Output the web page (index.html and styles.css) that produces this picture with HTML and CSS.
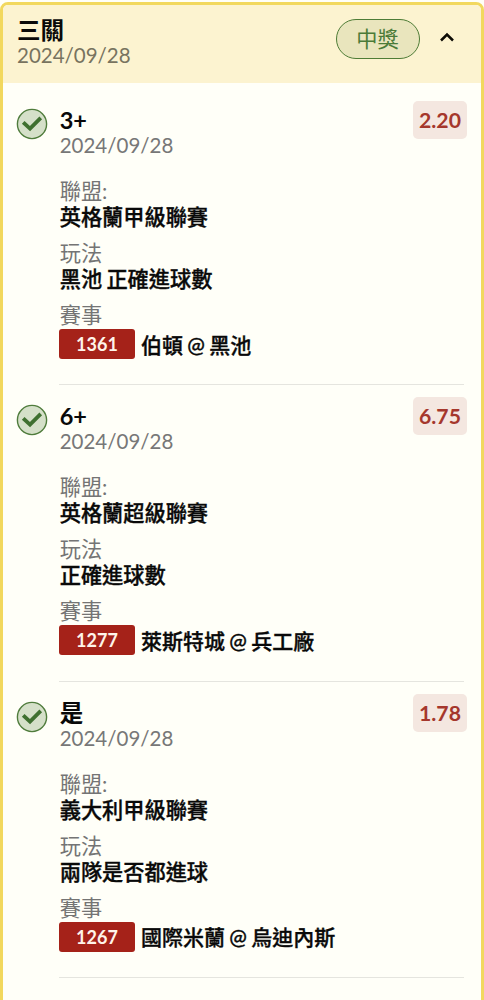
FILE: index.html
```html
<!DOCTYPE html>
<html lang="zh-Hant">
<head>
<meta charset="utf-8">
<title>三關</title>
<link rel="stylesheet" href="styles.css">
</head>
<body>
<main class="card">
  <header class="head">
    <div class="head-text">
      <h1 class="title">三關</h1>
      <div class="date">2024/09/28</div>
    </div>
    <span class="status">中獎</span>
    <svg class="chevron" viewBox="0 0 16 12"><path d="M2 9.5 8 3.5l6 6" fill="none" stroke="#0c0b05" stroke-width="2.5"/></svg>
  </header>
  <section class="leg">
    <svg class="check" viewBox="0 0 32 32"><circle cx="16" cy="16" r="14.6" fill="#d5e0c9" stroke="#4f7c3c" stroke-width="1.4"/><path d="M8.6 15.7 14 20.7 23.4 11.2" fill="none" stroke="#3f7030" stroke-width="3.8" stroke-linecap="square"/></svg>
    <div class="body">
      <h2 class="pick">3+</h2>
      <div class="date">2024/09/28</div>
      <dl class="info">
        <dt>聯盟:</dt><dd>英格蘭甲級聯賽</dd>
        <dt>玩法</dt><dd>黑池 正確進球數</dd>
        <dt>賽事</dt><dd class="match"><span class="code">1361</span><span class="teams">伯頓 @ 黑池</span></dd>
      </dl>
    </div>
    <span class="odds">2.20</span>
  </section>
  <section class="leg">
    <svg class="check" viewBox="0 0 32 32"><circle cx="16" cy="16" r="14.6" fill="#d5e0c9" stroke="#4f7c3c" stroke-width="1.4"/><path d="M8.6 15.7 14 20.7 23.4 11.2" fill="none" stroke="#3f7030" stroke-width="3.8" stroke-linecap="square"/></svg>
    <div class="body">
      <h2 class="pick">6+</h2>
      <div class="date">2024/09/28</div>
      <dl class="info">
        <dt>聯盟:</dt><dd>英格蘭超級聯賽</dd>
        <dt>玩法</dt><dd>正確進球數</dd>
        <dt>賽事</dt><dd class="match"><span class="code">1277</span><span class="teams">萊斯特城 @ 兵工廠</span></dd>
      </dl>
    </div>
    <span class="odds">6.75</span>
  </section>
  <section class="leg">
    <svg class="check" viewBox="0 0 32 32"><circle cx="16" cy="16" r="14.6" fill="#d5e0c9" stroke="#4f7c3c" stroke-width="1.4"/><path d="M8.6 15.7 14 20.7 23.4 11.2" fill="none" stroke="#3f7030" stroke-width="3.8" stroke-linecap="square"/></svg>
    <div class="body">
      <h2 class="pick">是</h2>
      <div class="date">2024/09/28</div>
      <dl class="info">
        <dt>聯盟:</dt><dd>義大利甲級聯賽</dd>
        <dt>玩法</dt><dd>兩隊是否都進球</dd>
        <dt>賽事</dt><dd class="match"><span class="code">1267</span><span class="teams">國際米蘭 @ 烏迪內斯</span></dd>
      </dl>
    </div>
    <span class="odds">1.78</span>
  </section>
</main>
</body>
</html>
```
FILE: styles.css
```css
* { box-sizing: border-box; }
html, body { height: 100%; }
body {
  margin: 0;
  padding: 2px 0.5px 0 0;
  overflow: hidden;
  background: #fffff8;
  font: 21.2px/26px Lato, "Noto Sans CJK TC", sans-serif;
  color: #090909;
}
h1, h2, dl, dd { margin: 0; }
.card {
  height: 1040px;
  border: 3px solid #f2d85e;
  border-radius: 8px;
  background: #fffff8;
  overflow: hidden;
}
.head {
  display: flex;
  align-items: flex-start;
  height: 78px;
  padding: 12px 26px 0 14px;
  background: #fcf3d0;
}
.head-text { flex: 1; }
.title { font-size: 23.6px; line-height: 26px; font-weight: 700; }
.date { color: #777; font-size: 20.5px; line-height: 24px; }
.head .date { color: #78735f; }
.status {
  width: 84px;
  height: 40px;
  margin-top: 2px;
  border: 1.4px solid #4e7c36;
  border-radius: 20px;
  background: #e9e5bd;
  color: #4b7b38;
  line-height: 38px;
  text-align: center;
}
.chevron { width: 16px; height: 12px; margin: 14px 0 0 19px; }
.leg {
  display: flex;
  align-items: flex-start;
  height: 296.4px;
  padding: 19px 13.5px 0 13px;
}
.head + .leg { margin-top: 5px; }
.check { width: 32px; height: 32px; margin-top: 1px; }
.body {
  flex: 1;
  height: 278.2px;
  margin-left: 11px;
  margin-right: -51px;
  border-bottom: 1.5px solid #e5e5df;
}
.pick { font-size: 23.5px; line-height: 26px; font-weight: 700; }
.pick, .body .date, .info dt, .info dd:not(.match) { padding-left: 0.7px; }
.info { margin-top: 21px; }
.info dt { color: #747474; }
.info dd {
  margin-bottom: 10px;
  font-weight: 500;
  word-spacing: -1px;
  -webkit-text-stroke: 0.35px currentColor;
}
.info .match { display: flex; align-items: center; gap: 6px; margin: 0; height: 32px; }
.teams { padding-top: 1px; font-size: 21px; }
.info .code {
  width: 76px;
  height: 30px;
  border-radius: 3px;
  background: #a52219;
  color: #fff4ea;
  font-size: 18px;
  font-weight: 700;
  line-height: 30px;
  text-align: center;
  -webkit-text-stroke: 0;
}
.odds {
  width: 54px;
  height: 38px;
  margin-top: -6px;
  border-radius: 5px;
  background: #f4e7e0;
  color: #a5372c;
  font-size: 21.2px;
  font-weight: 700;
  line-height: 39px;
  text-align: center;
}
```
